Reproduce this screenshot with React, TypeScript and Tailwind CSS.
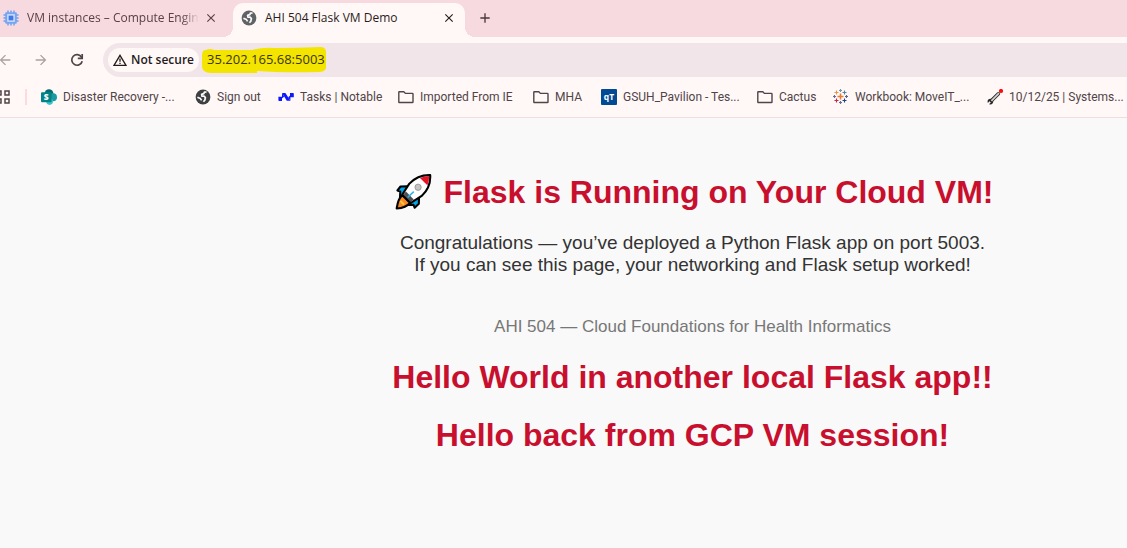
import type { ReactNode } from "react";
import { MdArrowBack, MdArrowForward, MdClose, MdAdd } from "react-icons/md";

function GlobeIcon({ className }: { className: string }) {
  return (
    <svg viewBox="0 0 16 16" className={className} aria-hidden="true">
      <circle cx="8" cy="8" r="7.4" fill="currentColor" />
      <path
        d="M11.6 3 9.4 3.2 8.8 4.6 6.6 5.4 7 7.2H9.2L10.4 8.6 9.8 11.2 8.4 12.8M2.4 8.2 5.4 9.6 6.6 11.4"
        fill="none"
        stroke="#fff8f7"
        strokeWidth="1.7"
        strokeLinejoin="round"
      />
    </svg>
  );
}

function ChipIcon() {
  return (
    <svg viewBox="0 0 16 16" className="size-4 shrink-0" aria-hidden="true">
      <path
        d="M5 .5V15.5M8 .5V15.5M11 .5V15.5M.5 5H15.5M.5 8H15.5M.5 11H15.5"
        stroke="#6c9cf0"
        strokeWidth="1.4"
      />
      <rect x="2.2" y="2.2" width="11.6" height="11.6" rx="1" fill="#78a5f3" />
      <rect x="4.2" y="4.2" width="7.6" height="7.6" fill="#d5e3fc" />
      <rect x="5.6" y="5.6" width="4.8" height="4.8" fill="#3f79e8" />
    </svg>
  );
}

function ReloadIcon() {
  return (
    <svg viewBox="0 0 16 16" className="size-4" fill="none" stroke="currentColor" strokeWidth="1.7" aria-hidden="true">
      <path d="M13.2 9.2A5.3 5.3 0 1 1 12.6 5.2L13.4 6.4" />
      <path d="M13.2 2V6.4H8.8" />
    </svg>
  );
}

function WarningIcon() {
  return (
    <svg viewBox="0 0 14 12" className="h-3 w-3.5" aria-hidden="true">
      <path d="M7 1.3 13 11.3H1Z" fill="none" stroke="currentColor" strokeWidth="1.3" />
      <path d="M7 4.6V7.8M7 8.8V10" stroke="currentColor" strokeWidth="1.3" />
    </svg>
  );
}

function FolderIcon() {
  return (
    <svg viewBox="0 0 16 16" className="size-4 shrink-0" aria-hidden="true">
      <path
        d="M1.2 2.8H5.8L7.4 4.4H14.4Q15 4.4 15 5V13Q15 13.5 14.4 13.5H1.4Q.8 13.5 .8 13V3.3Q.8 2.8 1.2 2.8Z"
        fill="none"
        stroke="#504448"
        strokeWidth="1.4"
      />
    </svg>
  );
}

function SharePointIcon() {
  return (
    <svg viewBox="0 0 16 16" className="size-4 shrink-0" aria-hidden="true">
      <circle cx="8" cy="4.6" r="4.4" fill="#036c70" />
      <circle cx="12" cy="8.2" r="4" fill="#1a9ba1" />
      <circle cx="8.6" cy="12.6" r="3.3" fill="#37c6d0" />
      <rect x="0" y="3.2" width="10.6" height="10" rx="1" fill="#038387" />
      <text x="5.2" y="11.2" textAnchor="middle" fontSize="8.5" fontWeight="800" fill="#fff" className="font-['Open_Sans',sans-serif]">
        S
      </text>
    </svg>
  );
}

function NotableIcon() {
  return (
    <svg viewBox="0 0 16 16" className="size-4 shrink-0" aria-hidden="true">
      <path d="M4 4H7.4L12.4 11.8H8.8Z" fill="#0a19ff" />
      <path d="M.4 7.8H4V12H1.2Q.4 12 .4 11.2Z" fill="#0a19ff" />
      <path d="M12 4H15Q15.8 4 15.8 4.8V8.2H12Z" fill="#0a19ff" />
      <path d="M4 4 6.2 7.6 4 9.6ZM12.4 11.8 10.2 8.2 12.4 6.2Z" fill="#0a19ff" />
    </svg>
  );
}

function QtIcon() {
  return (
    <svg viewBox="0 0 16 16" className="size-4 shrink-0" aria-hidden="true">
      <rect width="16" height="16" rx="1" fill="#034a95" />
      <text x="8" y="11" textAnchor="middle" fontSize="8.5" fontWeight="700" fill="#fff" className="font-['Open_Sans',sans-serif]">
        qT
      </text>
    </svg>
  );
}

function TableauIcon() {
  return (
    <svg viewBox="0 0 16 16" className="size-4 shrink-0" fill="none" strokeWidth="1.1" aria-hidden="true">
      <path d="M7.5 4.5V10.5M4.5 7.5H10.5" stroke="#eb7a32" strokeWidth="1.5" />
      <path d="M3.5 1.5V5.5M1.5 3.5H5.5" stroke="#e39a45" />
      <path d="M11.5 1.5V5.5M9.5 3.5H13.5" stroke="#4f8796" />
      <path d="M3.5 9.5V13.5M1.5 11.5H5.5" stroke="#c42a46" />
      <path d="M11.5 9.5V13.5M9.5 11.5H13.5" stroke="#1f447e" />
      <path d="M7.5 0V3M6 1.5H9" stroke="#6f98ab" />
      <path d="M7.5 12V15M6 13.5H9" stroke="#6b6b94" />
      <path d="M1.5 6V9M0 7.5H3" stroke="#6b6b94" />
      <path d="M13.5 6V9M12 7.5H15" stroke="#5b6591" />
    </svg>
  );
}

function WrenchIcon() {
  return (
    <svg viewBox="0 0 16 16" className="size-4 shrink-0" aria-hidden="true">
      <path d="M3.6 12.6 11.4 4.8" stroke="#2a2a2a" strokeWidth="3.6" strokeLinecap="round" />
      <circle cx="3.4" cy="12.6" r="2.8" fill="#2a2a2a" />
      <path d="M4.4 11.8 12 4.2" stroke="#d4d0d0" strokeWidth="1.8" />
      <path d="M.4 15.6 3.2 12.8" stroke="#fff8f7" strokeWidth="1.7" />
      <circle cx="14" cy="2" r="2.1" fill="#ff0d0d" />
    </svg>
  );
}

function AppsIcon() {
  return (
    <svg viewBox="0 0 14 14" className="size-3.5" fill="none" stroke="currentColor" strokeWidth="1.5" aria-hidden="true">
      <path d="M1 1H5V5H1ZM9 1H13V5H9ZM1 9H5V13H1ZM9 9H13V13H9Z" />
    </svg>
  );
}

function RocketIcon() {
  return (
    <svg viewBox="-3.5 0 42.2 38" className="h-9 w-10" role="img" aria-label="Rocket" strokeLinejoin="round">
      <g stroke="#000" strokeWidth="2.2">
        <path d="M13 13 5.5 13.2 2.2 17.4 5.2 18.4 5 24 10 26ZM25 25 24.8 31.5 20.4 35.6 19.2 32.6 13.5 32.8 12 28Z" fill="#00a8e8" />
        <path d="M7.4 22.5Q3 25.5 1.4 36.4Q11.5 35.6 15.4 30.4Z" fill="#f7891f" />
        <path d="M36.8 1.2Q23.6.8 14.6 10.4L7.4 21.6 16.4 30.6 27.8 23.2Q37.6 14 36.8 1.2Z" fill="#fff" />
      </g>
      <path d="M35.7 2.3Q30.5 2.2 26 4.3L33.8 12Q35.8 7.8 35.7 2.3Z" fill="#e81224" />
      <path d="M8.7 21.3 11.2 18.5 19.5 26.9 16.5 29.2Z" fill="#4d5055" />
      <path d="M5.4 28.5 9.2 32.2" stroke="#ffc34d" strokeWidth="2" />
      <circle cx="24" cy="14" r="3.3" fill="#c5c5c5" stroke="#999" />
      <path d="M13 24.8 19.4 18.6" stroke="#28b4eb" strokeWidth="1.6" />
    </svg>
  );
}

const bookmarks: { label: string; icon: ReactNode }[] = [
  { label: "Disaster Recovery -...", icon: <SharePointIcon /> },
  { label: "Sign out", icon: <GlobeIcon className="size-4 shrink-0 text-[#3c4043]" /> },
  { label: "Tasks | Notable", icon: <NotableIcon /> },
  { label: "Imported From IE", icon: <FolderIcon /> },
  { label: "MHA", icon: <FolderIcon /> },
  { label: "GSUH_Pavilion - Tes...", icon: <QtIcon /> },
  { label: "Cactus", icon: <FolderIcon /> },
  { label: "Workbook: MoveIT_...", icon: <TableauIcon /> },
  { label: "10/12/25 | Systems...", icon: <WrenchIcon /> },
];

function TabStrip() {
  return (
    <div role="tablist" className="flex h-[37px] bg-[#f6dadf] pt-[3px]">
      <div className="flex w-[233px] shrink-0 items-center pr-[15px] pb-1 pl-[3px] text-[#5a4046]">
        <ChipIcon />
        <button
          role="tab"
          aria-selected="false"
          className="ml-2 w-[172px] overflow-hidden text-left whitespace-nowrap mask-r-from-90%"
        >
          VM instances – Compute Engine
        </button>
        <button aria-label="Close VM instances" className="ml-auto">
          <MdClose className="size-3.5" />
        </button>
      </div>
      <div className="relative flex w-[232px] shrink-0 items-center rounded-t-[10px] bg-[#fff8f7] pr-[9px] pb-1 pl-2 text-[#2b1c20]">
        <span className="absolute bottom-0 -left-2.5 size-2.5 bg-radial-[at_0_0] from-transparent from-[10px] to-[#fff8f7] to-[10px]" />
        <span className="absolute -right-2.5 bottom-0 size-2.5 bg-radial-[at_100%_0] from-transparent from-[10px] to-[#fff8f7] to-[10px]" />
        <GlobeIcon className="size-4 shrink-0 text-[#5f6368]" />
        <button role="tab" aria-selected="true" className="ml-2 whitespace-nowrap">
          AHI 504 Flask VM Demo
        </button>
        <button aria-label="Close AHI 504 Flask VM Demo" className="ml-auto">
          <MdClose className="size-3.5" />
        </button>
      </div>
      <button aria-label="New tab" className="ml-3 pb-1 text-[#4a373c]">
        <MdAdd className="size-4" />
      </button>
    </div>
  );
}

function Toolbar() {
  return (
    <div className="flex h-[46px] items-center">
      <button aria-label="Back" className="-ml-[3px] text-[#aaa0a2]">
        <MdArrowBack className="size-4" />
      </button>
      <button aria-label="Forward" className="ml-5 text-[#aaa0a2]">
        <MdArrowForward className="size-4" />
      </button>
      <button aria-label="Reload" className="ml-5 text-[#504448]">
        <ReloadIcon />
      </button>
      <div className="ml-[18px] flex h-[34px] grow items-center rounded-l-full bg-[#f1e5e9] pl-[5px]">
        <button className="flex h-6 items-center gap-1 rounded-full bg-[#fff8f7] px-[5px] font-semibold text-[#241a1c]">
          <WarningIcon />
          Not secure
        </button>
        <div className="relative ml-2 flex grow items-center">
          <svg
            viewBox="0 0 124 28"
            className="absolute -left-[5px] h-7 w-[124px]"
            aria-hidden="true"
          >
            <path
              d="M4 4Q8 2 12 4H50Q60 1 72 2Q96 2 118 1Q124 1 124 6V22Q123 26 117 26Q80 27 55 25V27H9Q0 27 0 20V9Q0 4 4 4Z"
              fill="#f3e500"
            />
          </svg>
          <input
            id="address"
            aria-label="Address"
            defaultValue="35.202.165.68:5003"
            className="relative w-full bg-transparent text-[13px] text-[#3c3512] outline-none"
          />
        </div>
      </div>
    </div>
  );
}

function BookmarksBar() {
  return (
    <nav aria-label="Bookmarks" className="flex h-[35px] items-center overflow-hidden border-b border-[#f1dde1] pb-[7px] text-[#504448]">
      <button aria-label="Apps" className="-ml-1 shrink-0">
        <AppsIcon />
      </button>
      <span className="ml-[15px] h-4 w-0.5 shrink-0 bg-[#ffd9e1]" />
      <div className="ml-3.5 grid shrink-0 grid-cols-[154px_83px_120px_135px_68px_156px_76px_154px_140px] font-['Roboto',sans-serif]">
        {bookmarks.map((item) => (
          <a key={item.label} href="#" className="flex items-center gap-1.5 whitespace-nowrap">
            {item.icon}
            {item.label}
          </a>
        ))}
      </div>
    </nav>
  );
}

export default function App() {
  return (
    <div className="flex min-h-screen flex-col overflow-hidden bg-[#f9f9f9] font-['Open_Sans',sans-serif] text-[12px]">
      <header className="bg-[#fff8f7]">
        <TabStrip />
        <Toolbar />
        <BookmarksBar />
      </header>
      <main className="flex flex-col items-center pt-[54px] pl-[258px] text-center font-['Liberation_Sans',Arial,sans-serif] text-[#333333]">
        <h1 className="flex items-center gap-3 text-[32px] leading-10 font-bold text-[#c8102e]">
          <RocketIcon />
          Flask is Running on Your Cloud VM!
        </h1>
        <p className="mt-5 text-[19px] leading-[22px]">
          Congratulations — you’ve deployed a Python Flask app on port 5003.
          <br />
          If you can see this page, your networking and Flask setup worked!
        </p>
        <p className="mt-[41px] text-[17px] leading-5 text-[#777777]">
          AHI 504 — Cloud Foundations for Health Informatics
        </p>
        <h2 className="mt-5 text-[32px] leading-10 font-bold text-[#c8102e]">
          Hello World in another local Flask app!!
        </h2>
        <h2 className="mt-[18px] text-[32px] leading-10 font-bold text-[#c8102e]">
          Hello back from GCP VM session!
        </h2>
      </main>
    </div>
  );
}
